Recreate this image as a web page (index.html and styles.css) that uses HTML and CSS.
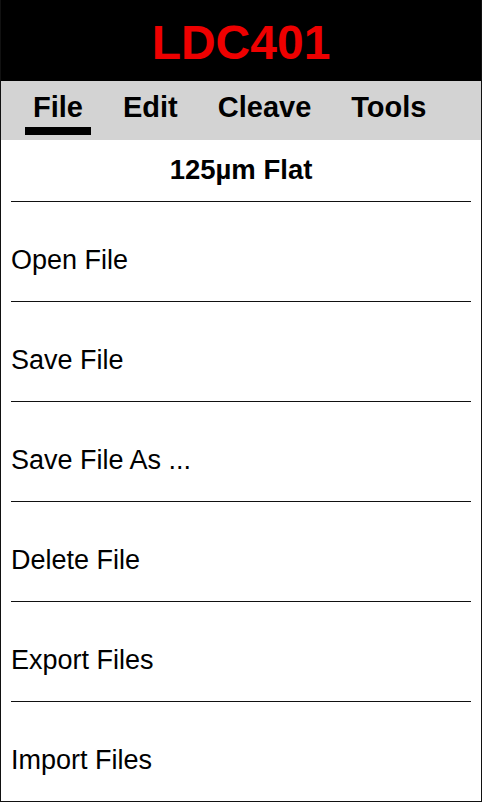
FILE: index.html
```html
<!DOCTYPE html>
<html lang="en">
<head>
    <meta charset="UTF-8">
    <meta name="viewport" content="width=device-width, initial-scale=1.0">
    <title>LDC401</title>
    <link rel="stylesheet" href="styles.css">
</head>
<body>
    <div class="screen">
        <header class="top-bar">
            <h1>LDC401</h1>
        </header>
        <nav class="tabs">
            <span class="tab active">File</span>
            <span class="tab">Edit</span>
            <span class="tab">Cleave</span>
            <span class="tab">Tools</span>
        </nav>
        <div class="menu">
            <div class="menu-title">125µm Flat</div>
            <div class="menu-item">Open File</div>
            <div class="menu-item">Save File</div>
            <div class="menu-item">Save File As ...</div>
            <div class="menu-item">Delete File</div>
            <div class="menu-item">Export Files</div>
            <div class="menu-item last">Import Files</div>
        </div>
    </div>
</body>
</html>
```

FILE: styles.css
```css
body {
    margin: 0;
    padding: 0;
    font-family: "Liberation Sans", Arial, sans-serif;
    background: white;
    color: black;
}
.screen {
    width: 482px;
    height: 802px;
    box-sizing: border-box;
    border: 1px solid #111;
    border-top: none;
    overflow: hidden;
}
.top-bar {
    background: black;
    height: 81px;
    margin: 0 -1px;
    display: flex;
    align-items: center;
    justify-content: center;
}
.top-bar h1 {
    margin: 0;
    color: #ee0000;
    font-size: 48px;
    line-height: 55px;
    padding-top: 3px;
}
.tabs {
    background: #d3d3d3;
    display: flex;
    gap: 24px;
    padding: 10px 0 5px 24px;
}
.tab {
    font-size: 29px;
    font-weight: bold;
    line-height: 32px;
    padding: 0 8px 4px;
    border-bottom: 8px solid transparent;
}
.tab.active {
    border-bottom-color: black;
}
.menu {
    padding: 0 10px;
}
.menu-title {
    font-size: 27.5px;
    font-weight: bold;
    text-align: center;
    line-height: 32px;
    padding: 14px 0 14px;
    height: 33px;
    border-bottom: 1px solid #111;
}
.menu-item {
    font-size: 27px;
    line-height: 32px;
    height: 32px;
    padding: 42px 0 25px;
    border-bottom: 1px solid #111;
}
.menu-item.last {
    border-bottom: none;
}
```
